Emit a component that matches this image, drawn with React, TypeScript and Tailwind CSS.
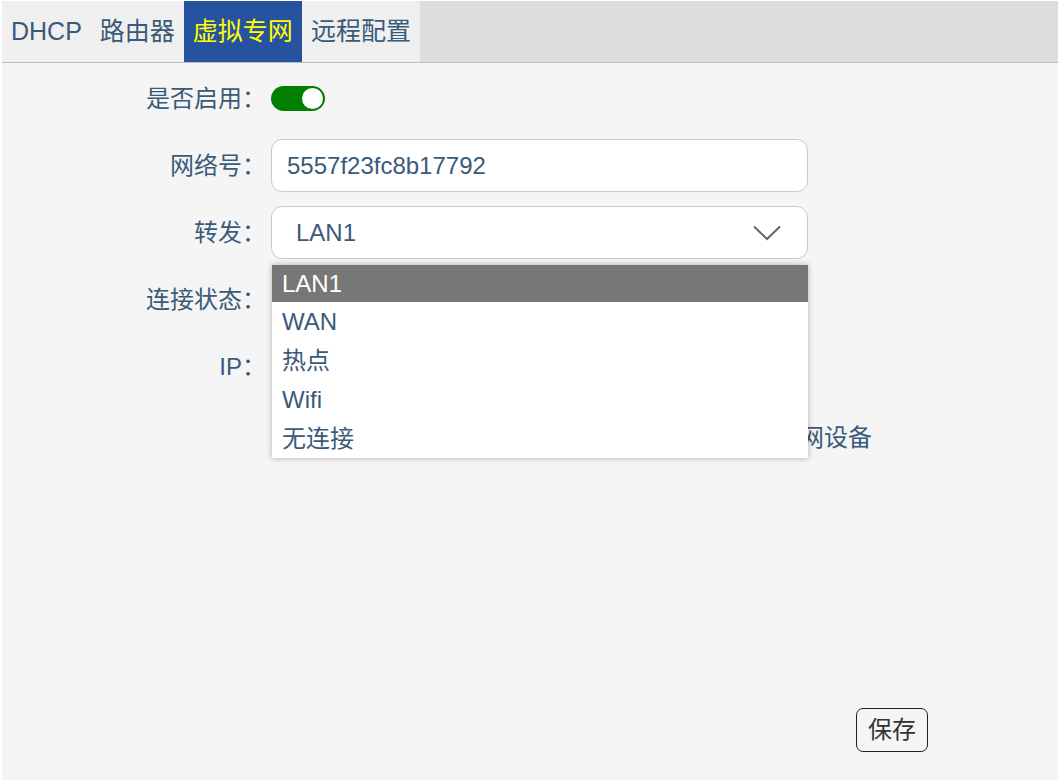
import React from "react";

const font = { fontFamily: '"Liberation Sans", "Noto Sans CJK SC", sans-serif' };

function Row({ label, children }: { label: string; children?: React.ReactNode }) {
  return (
    <div className="flex h-[53px] items-center">
      <div className="w-[264px] shrink-0 text-right text-[24px] text-[#3a5a7a]">{label}</div>
      <div className="ml-[5px] flex h-full flex-1 items-center">{children}</div>
    </div>
  );
}

export default function App() {
  const tabs = ["DHCP", "路由器", "虚拟专网", "远程配置"];
  const options = ["LAN1", "WAN", "热点", "Wifi", "无连接"];
  return (
    <div className="h-[780px] w-[1059px] overflow-hidden bg-white pl-[2px] pr-[1px] pt-[1px]" style={font}>
      <div className="flex h-full flex-col bg-[#f5f5f5]">
        <div className="flex h-[62px] shrink-0 border-b border-[#b6bec8] bg-[#dcdddd]">
          {tabs.map((t, i) => (
            <div
              key={t}
              className={
                i === 2
                  ? "flex items-center bg-[#2652a0] px-[9px] text-[25px] text-[#ffff00]"
                  : "flex items-center bg-[#efefef] px-[9px] text-[25px] text-[#3a5a7a]"
              }
            >
              {t}
            </div>
          ))}
        </div>
        <div className="relative flex flex-1 flex-col pt-[9px]">
          <div className="flex flex-col gap-[14px]">
            <Row label="是否启用：">
              <div className="flex h-[25px] w-[54px] items-center justify-end rounded-full bg-[#008000] pr-[2px]">
                <div className="h-[21px] w-[21px] rounded-full bg-white" />
              </div>
            </Row>
            <Row label="网络号：">
              <div className="flex h-full w-[537px] items-center rounded-[11px] border border-[#c9c9d1] bg-white pl-[15px] text-[24px] text-[#3a5a7a]">
                5557f23fc8b17792
              </div>
            </Row>
            <Row label="转发：">
              <div className="flex h-full w-[537px] items-center justify-between rounded-[11px] border border-[#c9c9d1] bg-white pl-[24px] pr-[26px] text-[24px] text-[#3a5a7a]">
                <span>LAN1</span>
                <svg width="28" height="16" viewBox="0 0 28 16" fill="none">
                  <path d="M1 1.5 L14 14 L27 1.5" stroke="#666" strokeWidth="2" />
                </svg>
              </div>
            </Row>
            <Row label="连接状态：" />
            <Row label="IP：" />
            <div className="mt-[4px] flex h-[53px] items-center pl-[798px]">
              <span className="whitespace-nowrap text-[24px] text-[#3a5a7a]">网设备</span>
            </div>
          </div>
          <div className="absolute left-[270px] top-[202px] w-[536px] bg-white text-[24px] text-[#3a5a7a] shadow-[0_0_6px_rgba(0,0,0,0.3)]">
            {options.map((o, i) => (
              <div
                key={o}
                className={
                  i === 0
                    ? "flex h-[37px] items-center bg-[#777777] px-[10px] text-white"
                    : "flex h-[39px] items-center px-[10px]"
                }
              >
                {o}
              </div>
            ))}
          </div>
          <div className="mt-auto flex justify-end pb-[28px] pr-[130px]">
            <button className="flex h-[44px] w-[72px] items-center justify-center rounded-[7px] border border-[#222] text-[24px] text-[#333]">
              保存
            </button>
          </div>
        </div>
      </div>
    </div>
  );
}
